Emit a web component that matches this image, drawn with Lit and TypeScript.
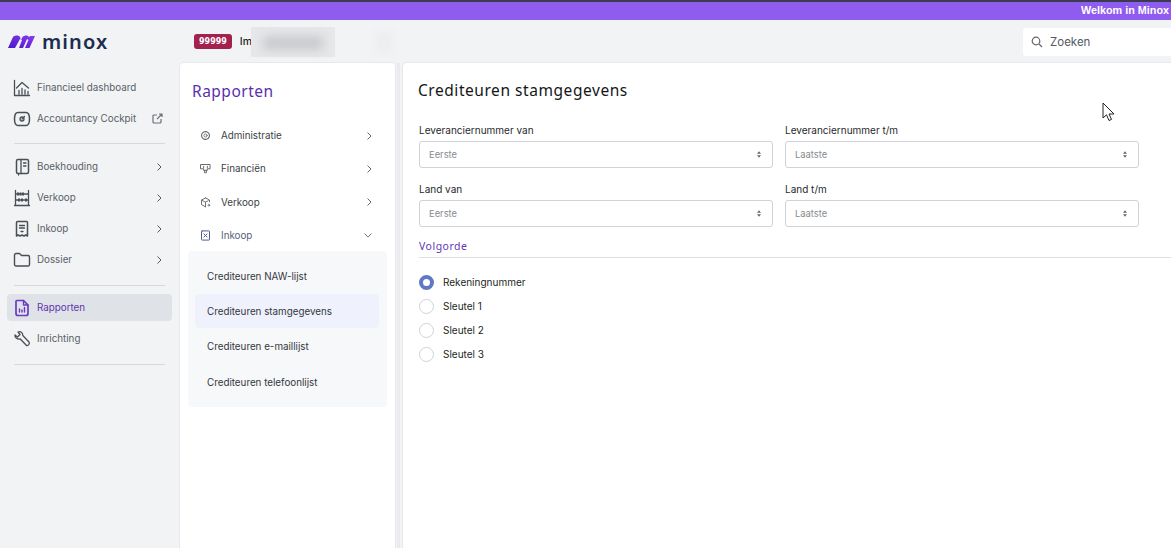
import { LitElement, html, css, svg } from 'lit';
import { customElement } from 'lit/decorators.js';

const ic = (body: unknown, size = 18) => html`<svg class="ic" width=${size} height=${size} viewBox="0 0 18 18" fill="none" stroke="currentColor" stroke-width="1.3" stroke-linecap="round" stroke-linejoin="round">${body}</svg>`;

const icons: Record<string, unknown> = {
    dash: svg`<path d="M1.5 1.5V16.5H16.5M3.5 9L9 3.5 15.5 9M6 15V11.5M9 15V9.5M12 15V11M15 15V12.5"/>`,
    cockpit: svg`<path d="M5 2.5H13C15.5 2.5 16.5 5 16.5 9S15 15.5 13 15.5H5C3 15.5 1.5 13 1.5 9S2.5 2.5 5 2.5Z" stroke-width="1.5"/><circle cx="9" cy="9" r="2"/><path d="M9 9L11.5 6.5"/>`,
    book: svg`<rect x="3.5" y="1.5" width="12" height="14" rx="1.5" stroke-width="1.5"/><path d="M8 1.5V15.5M10.5 5H13M10.5 8H13M5.5 15.5V17"/>`,
    abacus: svg`<path d="M2.5 1.5V16.5M15.5 1.5V16.5M1.5 16.5H16.5M2.5 5H15.5M2.5 11H15.5"/><path d="M5 3.5V6.5M7.5 3.5V6.5M10 3.5V6.5M6 9.5V12.5M9 9.5V12.5M13 9.5V12.5" stroke-width="2" stroke-linecap="butt"/>`,
    receipt: svg`<path d="M3.5 2.5A1 1 0 0 1 4.5 1.5H13.5A1 1 0 0 1 14.5 2.5V16L12.8 15 11 16 9 15 7 16 5.2 15 3.5 16Z" stroke-width="1.5"/><path d="M6.5 5.5H11.5M6.5 8H11.5M8 11.5H10"/>`,
    folder: svg`<path d="M1.5 4A1.5 1.5 0 0 1 3 2.5H6.5L8.5 4.5H15A1.5 1.5 0 0 1 16.5 6V13.5A1.5 1.5 0 0 1 15 15H3A1.5 1.5 0 0 1 1.5 13.5Z" stroke-width="1.4"/>`,
    report: svg`<path d="M4 1.5H10.5L15 6V14.5A2 2 0 0 1 13 16.5H5A2 2 0 0 1 3 14.5V2.5A1 1 0 0 1 4 1.5Z" stroke-width="1.7"/><path d="M6.5 13V10M9 13V11M11.5 13V8.5M10.5 1.5V6H15" stroke-width="1.4"/>`,
    wrench: svg`<path d="M2 5L4.5 7 7 4.5 5 2C7.5 .8 10 2.5 9.8 5.5L16 12C17 13.5 15.5 16 13.5 15.5L7.3 9C4.5 9.5 1.5 8 2 5Z" stroke-width="1.3"/>`,
    gear: svg`<circle cx="9" cy="9" r="2.6"/><circle cx="9" cy="9" r="6.4" stroke-dasharray="2.4 .8" stroke-width="1.8"/>`,
    trophy: svg`<path d="M1.5 2.5H16.5V9.5H12V12H6V9.5H1.5ZM7.5 12V16H10.5V12M6 5.5V8M12 5.5V8" stroke-width="1.6"/>`,
    box: svg`<path d="M9 1.5L15.5 5V8M9 1.5L2.5 5V12.5L9 16M2.5 5L9 8.5 13.5 6M9 8.5V16" stroke-width="1.5"/><circle cx="14.5" cy="13.5" r="1.4"/>`,
    doc: svg`<rect x="2.5" y="1.5" width="13" height="15" rx="1" stroke-width="1.6"/><path d="M6.5 6.5L11.5 11.5M11.5 6.5L6.5 11.5" stroke-width="1.6"/>`,
};

const chevRight = html`<svg class="chev" width="8" height="10" viewBox="0 0 8 10" fill="none" stroke="currentColor" stroke-width="1"><path d="M2.5 1.5L6 5 2.5 8.5"/></svg>`;
const chevDown = html`<svg class="chev" width="10" height="8" viewBox="0 0 10 8" fill="none" stroke="currentColor" stroke-width=".9"><path d="M1.5 2.5L5 6 8.5 2.5"/></svg>`;

/** Left navigation */
@customElement('side-nav')
export class SideNav extends LitElement {
    static styles = css`
        :host { display: block; padding: 9px 8px 0 7px; color: #5a5f66; font-size: 9.8px; }
        .row { display: flex; align-items: center; height: 31px; padding: 0 9px 0 6px; border-radius: 4px; }
        .row .ic { margin-right: 6px; color: #4a4f55; flex: none; }
        .row span { flex: 1; }
        .row.active { height: 27px; color: #5e35b1; background: #dfe2e6; margin: 1px 0 2px; }
        .row.active .ic { color: #6a3bc4; }
        hr { border: 0; border-top: 1px solid #d5d8dc; margin: 9px 7px 7px; }
        hr.tight { margin: 10px 7px 8px; }
        hr.end { margin: 10px 7px 0; }
        .chev { color: #55595e; }
        .ext { color: #6b6f75; }
    `;

    render() {
        const row = (i: string, t: string, more = true) => html`<div class="row">${ic(icons[i])}<span>${t}</span>${more ? chevRight : ''}</div>`;
        return html`
            ${row('dash', 'Financieel dashboard', false)}
            <div class="row">${ic(icons.cockpit)}<span>Accountancy Cockpit</span>
                <svg class="ext" width="11" height="11" viewBox="0 0 11 11" fill="none" stroke="currentColor" stroke-width="1.2"><path d="M5 2H2A1 1 0 0 0 1 3V9A1 1 0 0 0 2 10H8A1 1 0 0 0 9 9V6M5 6L10 1M7 1H10V4"/></svg>
            </div>
            <hr />
            ${row('book', 'Boekhouding')}
            ${row('abacus', 'Verkoop')}
            ${row('receipt', 'Inkoop')}
            ${row('folder', 'Dossier')}
            <hr class="tight" />
            <div class="row active">${ic(icons.report)}<span>Rapporten</span></div>
            ${row('wrench', 'Inrichting', false)}
            <hr class="end" />
        `;
    }
}

/** Middle column with the report menu */
@customElement('report-menu')
export class ReportMenu extends LitElement {
    static styles = css`
        :host { display: block; background: #fff; border-radius: 4px 4px 0 0; box-shadow: 0 0 0 1px #e6e8eb; height: 100%; padding: 17px 8px 0; box-sizing: border-box; color: #3b3f44; font-size: 9.8px; }
        h2 { margin: 0 0 17px 4px; font: 400 15.5px/22px "Noto Sans", sans-serif; color: #5a2fb0; letter-spacing: .5px; }
        .row { display: flex; align-items: center; height: 33.5px; padding: 0 14px 0 12px; }
        .row.first { height: 33px; }
        .row .ic { margin-right: 10px; color: #666; flex: none; }
        .row span { flex: 1; }
        .row.open { height: 32px; color: #56607a; }
        .row.open .ic { color: #4a5a90; }
        .chev { color: #666; }
        .sub { background: #f7f8fa; border-radius: 4px; padding: 7px 8px 7px 7px; }
        .sub div { display: flex; align-items: center; height: 36px; padding-left: 12px; border-radius: 4px; color: #33373c; }
        .sub .on { background: #eff2fc; height: 34px; }
    `;

    render() {
        const row = (i: string, t: string, cls = '') => html`<div class="row ${cls}">${ic(icons[i], 11)}<span>${t}</span>${chevRight}</div>`;
        return html`
            <h2>Rapporten</h2>
            ${row('gear', 'Administratie', 'first')}
            ${row('trophy', 'Financiën')}
            ${row('box', 'Verkoop')}
            <div class="row open">${ic(icons.doc, 11)}<span>Inkoop</span>${chevDown}</div>
            <div class="sub">
                <div>Crediteuren NAW-lijst</div>
                <div class="on">Crediteuren stamgegevens</div>
                <div>Crediteuren e-maillijst</div>
                <div>Crediteuren telefoonlijst</div>
            </div>
        `;
    }
}

/** The report form */
@customElement('report-form')
export class ReportForm extends LitElement {
    static styles = css`
        :host { display: block; background: #fff; border-radius: 4px 0 0 0; box-shadow: 0 0 0 1px #e6e8eb; height: 100%; padding: 16px 0 0 15px; box-sizing: border-box; color: #26292d; font-size: 10px; }
        h1 { margin: 0 0 22px; font: 400 15.5px/22px "Noto Sans", sans-serif; color: #14161a; letter-spacing: .55px; }
        .grid { display: grid; grid-template-columns: 354px 354px; column-gap: 12px; row-gap: 14px; margin-left: 1px; }
        label { display: block; height: 14px; line-height: 14px; margin-bottom: 4px; }
        .sel { display: flex; align-items: center; justify-content: space-between; box-sizing: border-box; height: 27px; padding: 0 11px 0 9px; border: 1px solid #cfd3d8; border-radius: 3px; color: #858a90; font-size: 9.4px; }
        h3 { margin: 12px 0 4px 1px; font: 400 10.5px/14px "Noto Sans", sans-serif; color: #6235b5; letter-spacing: .5px; }
        hr { border: 0; border-top: 1px solid #dcdfe3; margin: 0 0 12px 1px; }
        .radio { display: flex; align-items: center; height: 24px; margin-left: 1px; gap: 9px; color: #1d1f22; }
        .dot { box-sizing: border-box; width: 15px; height: 15px; border-radius: 50%; border: 1px solid #cfd2d6; background: #fff; }
        .dot.on { border: 4.5px solid #5f79c4; }
    `;

    render() {
        const updown = html`<svg width="4" height="7" viewBox="0 0 5 8" fill="#666"><path d="M2.5 0L5 3H0ZM2.5 8L0 5H5Z"/></svg>`;
        const field = (l: string, v: string) => html`<div><label>${l}</label><div class="sel">${v}${updown}</div></div>`;
        return html`
            <h1>Crediteuren stamgegevens</h1>
            <div class="grid">
                ${field('Leveranciernummer van', 'Eerste')}
                ${field('Leveranciernummer t/m', 'Laatste')}
                ${field('Land van', 'Eerste')}
                ${field('Land t/m', 'Laatste')}
            </div>
            <h3>Volgorde</h3>
            <hr />
            ${['Rekeningnummer', 'Sleutel 1', 'Sleutel 2', 'Sleutel 3'].map((t, i) => html`
                <div class="radio"><div class="dot ${i === 0 ? 'on' : ''}"></div>${t}</div>`)}
        `;
    }
}

@customElement('app-root')
export class AppRoot extends LitElement {
    static styles = css`
        :host { display: block; position: relative; width: 1171px; height: 548px; overflow: hidden; background: #f1f3f5; font-family: Inter, "Noto Sans", sans-serif; }
        .banner { box-sizing: border-box; height: 20px; border-top: 2px solid #3c3a4e; background: #8f5cf0; color: #fff; font: bold 10.8px/16px "Liberation Sans", sans-serif; white-space: nowrap; padding-left: 1081px; overflow: hidden; }
        .top { display: flex; align-items: center; height: 43px; }
        .logo { display: flex; align-items: center; width: 194px; padding-left: 8px; box-sizing: border-box; gap: 6px; }
        .word { font: 600 20px/24px "Noto Sans", sans-serif; color: #1b2c4e; letter-spacing: 1.1px; }
        .badge { background: #a3214f; color: #fff; font: bold 8px/15px "DejaVu Sans", sans-serif; padding: 0 5px; border-radius: 3px; }
        .org { margin-left: 8px; font-size: 10.5px; font-weight: 500; color: #1d1f22; width: 11px; flex: none; white-space: nowrap; }
        .smudge { width: 84px; height: 30px; background: #e6e7e9; position: relative; }
        .smudge::after { content: ''; position: absolute; left: 12px; top: 9px; width: 60px; height: 14px; background: #c9cbce; filter: blur(5px); }
        .smudge2 { width: 18px; height: 20px; margin-left: 40px; background: #eceef0; filter: blur(3px); }
        .search { margin-left: auto; width: 148px; height: 28px; background: #fff; border-radius: 3px 0 0 3px; display: flex; align-items: center; gap: 7px; padding-left: 8px; box-sizing: border-box; color: #55595e; font-size: 11.5px; }
        .cols { display: grid; grid-template-columns: 180px 215px 8px 1fr; height: 485px; }
        .split { position: relative; }
        .split::after { content: ''; position: absolute; left: 2px; top: 0; bottom: 0; width: 3px; background: #e9ebee; }
        .cursor { position: absolute; left: 1102px; top: 102px; }
    `;

    render() {
        return html`
            <div class="banner">Welkom in Minox Financieel</div>
            <div class="top">
                <div class="logo">
                    <svg width="28" height="14" viewBox="0 0 28 14"><defs><linearGradient id="g" x1="0" x2="1" y1="1" y2="0"><stop offset="0" stop-color="#4a18c8"/><stop offset="1" stop-color="#8a3cf0"/></linearGradient></defs><path fill="url(#g)" d="M0 13L5 2C7 0 11 0 12 2L13 5 14.5 2C16.5 0 20 0 21 2L22.5 1H27L21.5 13H17L20.5 5 19 4 15 13H11L14 5 12 4 7 13Z"/></svg>
                    <span class="word">minox</span>
                </div>
                <span class="badge">99999</span>
                <span class="org">Im</span>
                <div class="smudge"></div>
                <div class="smudge2"></div>
                <div class="search">
                    <svg width="12" height="12" viewBox="0 0 12 12" fill="none" stroke="#666" stroke-width="1.2"><circle cx="5" cy="5" r="3.8"/><path d="M8 8L11 11"/></svg>
                    Zoeken
                </div>
            </div>
            <div class="cols">
                <side-nav></side-nav>
                <report-menu></report-menu>
                <div class="split"></div>
                <report-form></report-form>
            </div>
            <svg class="cursor" width="14" height="20" viewBox="0 0 14 20"><path d="M1 1V16L4.5 12.8 7 18.5 9.5 17.4 7 12H12Z" fill="#fff" stroke="#222" stroke-width="1"/></svg>
        `;
    }
}
